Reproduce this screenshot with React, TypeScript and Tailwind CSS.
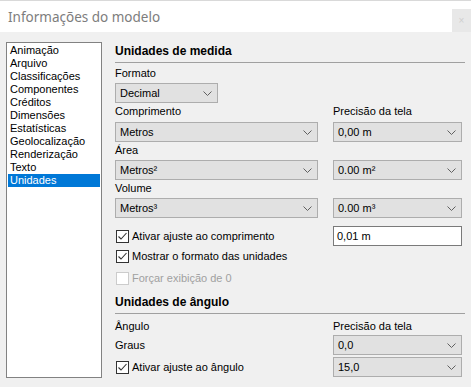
const items = [
  "Animação",
  "Arquivo",
  "Classificações",
  "Componentes",
  "Créditos",
  "Dimensões",
  "Estatísticas",
  "Geolocalização",
  "Renderização",
  "Texto",
  "Unidades",
];

function Chevron() {
  return (
    <svg width="9" height="5" viewBox="0 0 9 5" className="shrink-0">
      <polyline points="0.5,0.5 4.5,4.5 8.5,0.5" fill="none" stroke="#606060" strokeWidth="1" />
    </svg>
  );
}

function Select({ value, className = "" }: { value: string; className?: string }) {
  return (
    <div
      className={`flex h-[20px] items-center justify-between border border-[#adadad] bg-[#e1e1e1] pl-[4px] pr-[5px] ${className}`}
    >
      <span>{value}</span>
      <Chevron />
    </div>
  );
}

function Check({ label, checked = true, disabled = false }: { label: string; checked?: boolean; disabled?: boolean }) {
  return (
    <div className="flex h-[20px] items-center gap-[3px] pl-[1px]">
      <div
        className={`flex h-[13px] w-[13px] items-center justify-center border bg-white ${
          disabled ? "border-[#cccccc]" : "border-[#333333]"
        }`}
      >
        {checked && (
          <svg width="11" height="11" viewBox="0 0 11 11">
            <polyline points="1.5,5.5 4,8 9.5,2" fill="none" stroke="#333333" strokeWidth="1.1" />
          </svg>
        )}
      </div>
      <span className={disabled ? "text-[#a0a0a0]" : ""}>{label}</span>
    </div>
  );
}

export default function App() {
  return (
    <div className="h-[387px] w-[471px] overflow-hidden bg-[#f0f0f0] font-['Liberation_Sans',Arial,sans-serif] text-[11px] leading-[16px] text-black">
      {/* title bar */}
      <div className="flex h-[32px] justify-between border-t border-[#d9d9d9] bg-white">
        <div className="pl-[8px] pt-[6px] font-['Noto_Sans',sans-serif] text-[13.5px] leading-[20px] text-[#7d7d7d]">
          Informações do modelo
        </div>
        <div className="mt-[8px] flex h-[23px] w-[19px] items-center justify-center bg-[#e8e8e8] text-[10px] text-[#cfcfcf]">
          ×
        </div>
      </div>

      <div className="flex pl-[6px] pt-[10px]">
        {/* category list */}
        <div className="h-[336px] w-[96px] border border-[#828282] bg-white p-[1px] leading-[13px]">
          {items.map((it) => (
            <div
              key={it}
              className={`h-[13px] pl-[2px] ${it === "Unidades" ? "bg-[#0078d7] text-white" : ""}`}
            >
              {it}
            </div>
          ))}
        </div>

        {/* settings */}
        <div className="ml-[13px] w-[350px]">
          <div className="h-[21px] border-b border-[#a0a0a0] pt-[1px] text-[12px] font-bold">Unidades de medida</div>
          <div className="mt-[2px]">Formato</div>
          <Select value="Decimal" className="mt-[2px] w-[103px]" />

          <div className="grid grid-cols-[203px_129px] gap-x-[15px]">
            <div>Comprimento</div>
            <div>Precisão da tela</div>
            <Select value="Metros" className="mt-[3px]" />
            <Select value="0,00 m" className="mt-[3px]" />
            <div>Área</div>
            <div />
            <Select value="Metros²" className="mt-[2px]" />
            <Select value="0.00 m²" className="mt-[2px]" />
            <div>Volume</div>
            <div />
            <Select value="Metros³" className="mt-[2px]" />
            <Select value="0.00 m³" className="mt-[2px]" />
            <div className="mt-[8px]">
              <Check label="Ativar ajuste ao comprimento" />
            </div>
            <div className="mt-[8px] flex h-[20px] items-center border border-[#7a7a7a] bg-white pl-[3px]">0,01 m</div>
          </div>
          <Check label="Mostrar o formato das unidades" />
          <div className="mt-[2px]">
            <Check label="Forçar exibição de 0" checked={false} disabled />
          </div>

          <div className="mt-[5px] h-[21px] border-b border-[#a0a0a0] pt-[1px] text-[12px] font-bold">Unidades de ângulo</div>
          <div className="grid grid-cols-[203px_129px] gap-x-[15px]">
            <div className="mt-[4px]">Ângulo</div>
            <div className="mt-[4px]">Precisão da tela</div>
            <div className="mt-[1px] flex h-[20px] items-center">Graus</div>
            <Select value="0,0" className="mt-[1px]" />
            <div className="mt-[2px]">
              <Check label="Ativar ajuste ao ângulo" />
            </div>
            <Select value="15,0" className="mt-[2px]" />
          </div>
        </div>
      </div>
    </div>
  );
}
